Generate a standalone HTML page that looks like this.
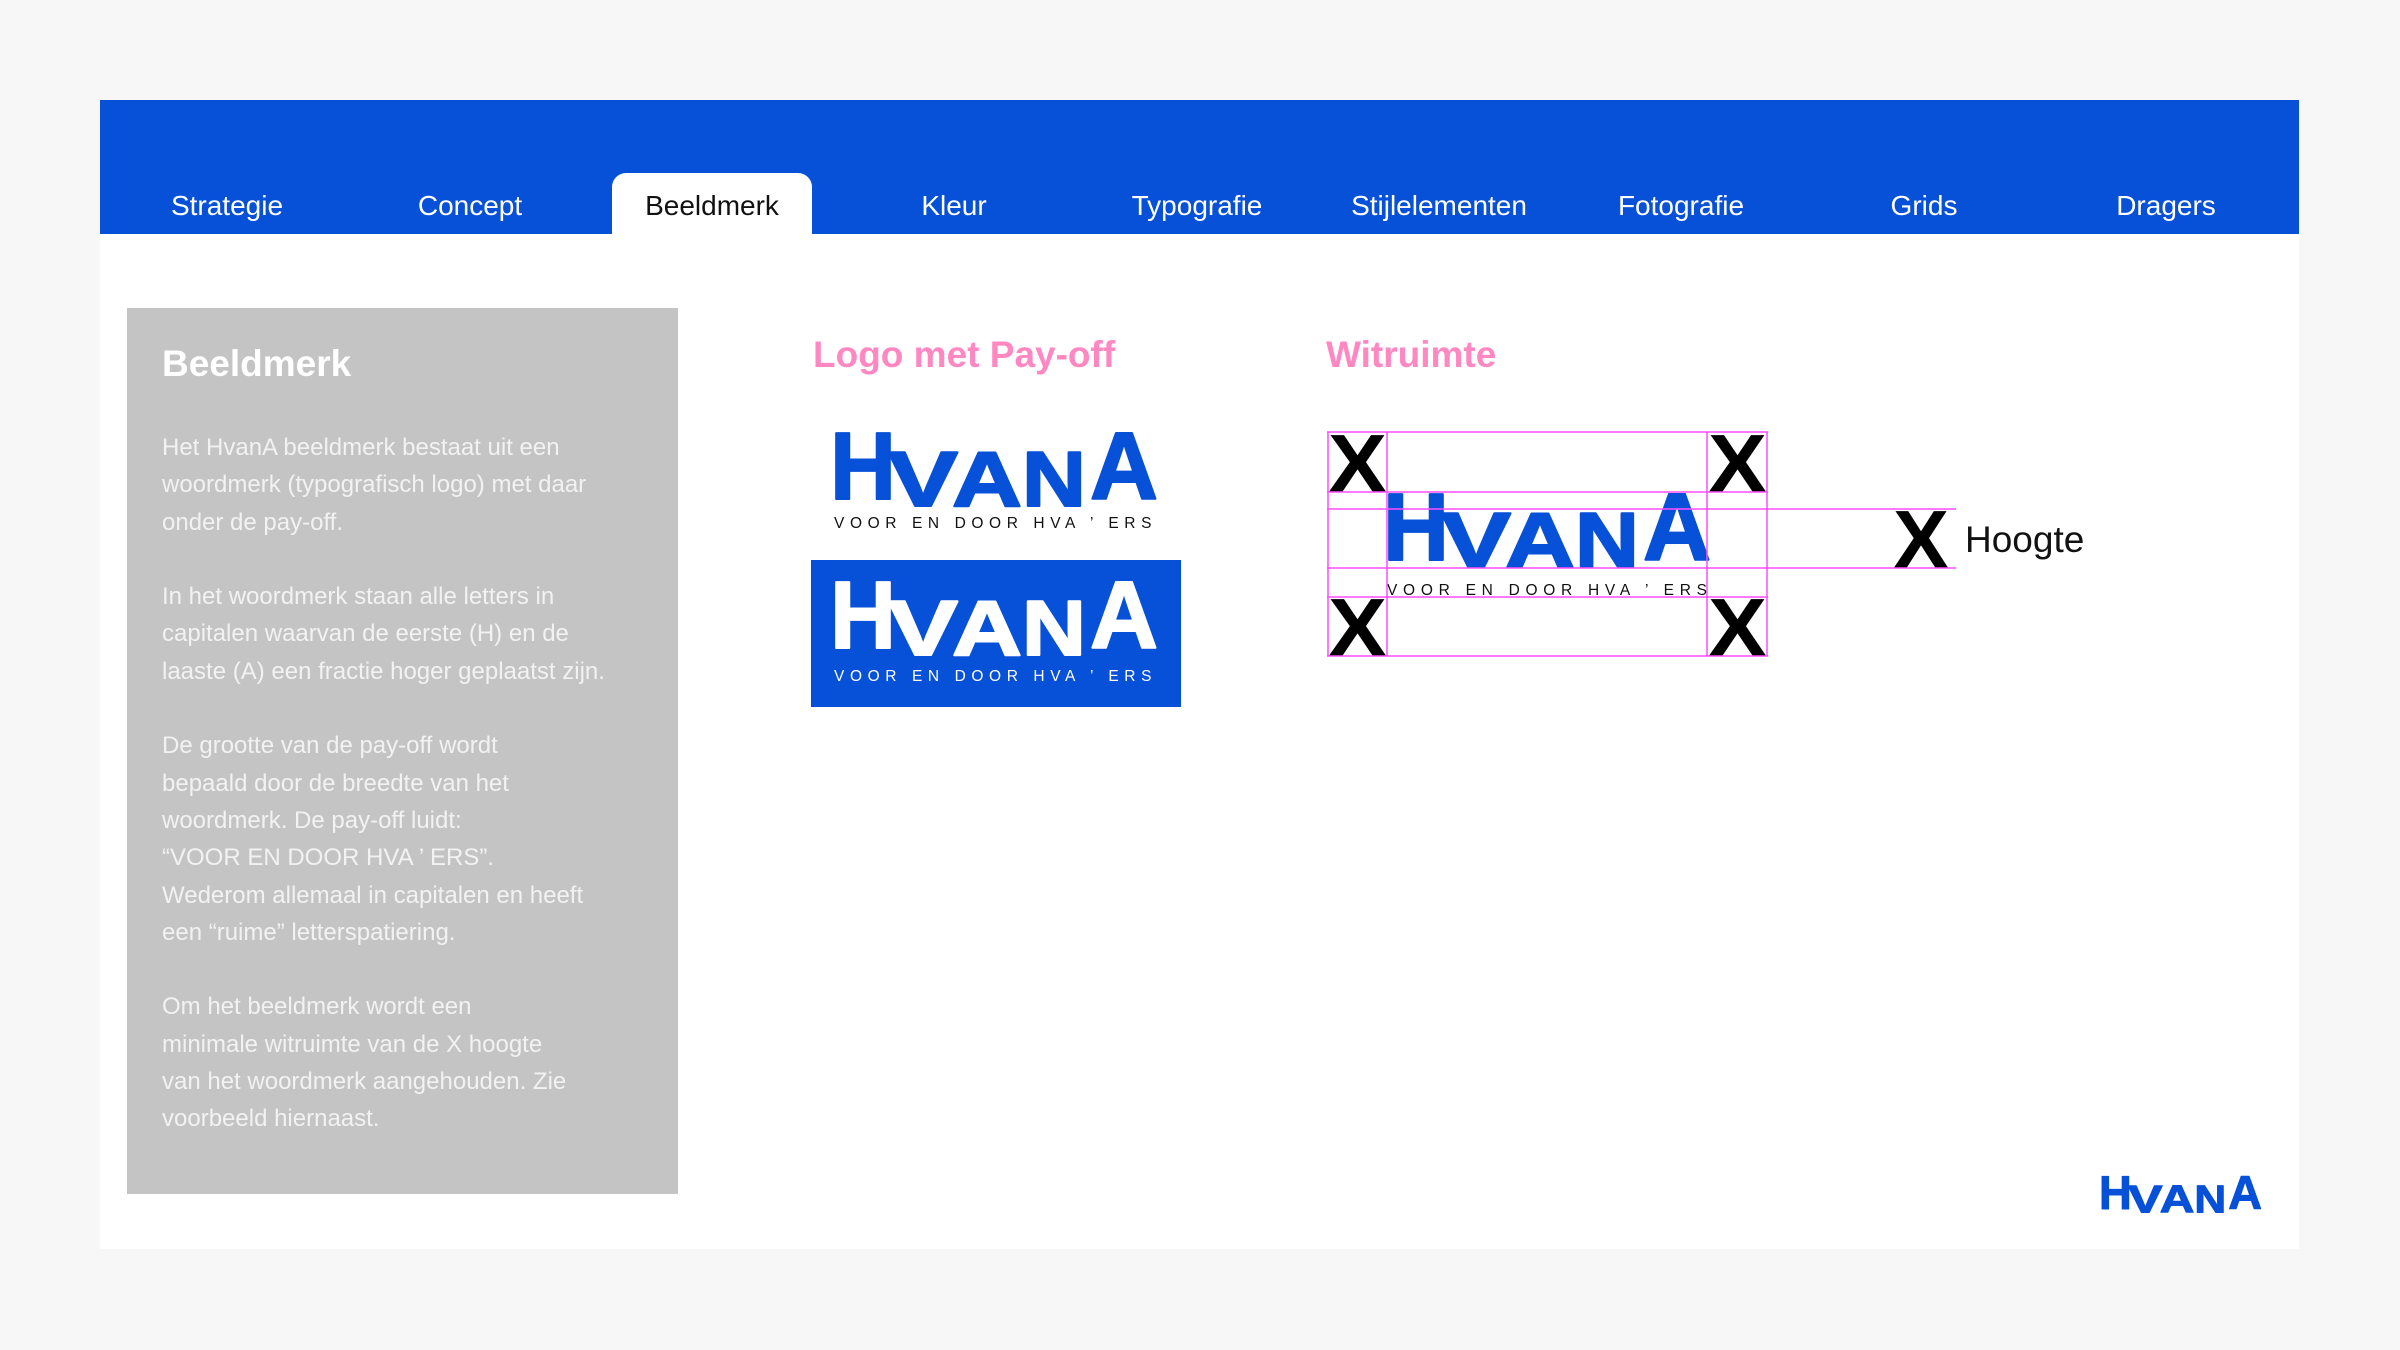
<!DOCTYPE html>
<html><head><meta charset="utf-8"><style>
body{margin:0;width:2400px;height:1350px;background:#f7f7f7;position:relative;overflow:hidden;font-family:"Liberation Sans",sans-serif}
.abs{position:absolute}
#hdr{left:100px;top:100px;width:2199px;height:134px;background:#0750d8}
#panel{left:100px;top:234px;width:2199px;height:1015px;background:#fff}
.tab{position:absolute;top:186px;width:242px;text-align:center;color:#fff;font-size:28px;line-height:40px;margin-left:-121px}
#act{left:612px;top:173px;width:200px;height:62px;background:#fff;border-radius:14px 14px 0 0}
#gray{left:127px;top:308px;width:551px;height:886px;background:#c4c4c4}
h1{position:absolute;margin:0;left:162px;top:342px;font-size:37px;color:#fff;font-weight:bold;line-height:44px}
#body{left:162px;top:429px;font-size:24px;line-height:37.3px;color:#f2f2f2;width:520px}
.pink{color:#ff88c3;font-weight:bold;font-size:37px;line-height:44px;top:333px}
.pay{font-size:15.5px;letter-spacing:5.6px;white-space:nowrap}
</style></head><body>
<div id="hdr" class="abs"></div>
<div id="panel" class="abs"></div>
<div id="act" class="abs"></div>
<div class="tab" style="left:227px">Strategie</div>
<div class="tab" style="left:470px">Concept</div>
<div class="tab" style="left:712px;color:#111">Beeldmerk</div>
<div class="tab" style="left:954px">Kleur</div>
<div class="tab" style="left:1197px">Typografie</div>
<div class="tab" style="left:1439px">Stijlelementen</div>
<div class="tab" style="left:1681px">Fotografie</div>
<div class="tab" style="left:1924px">Grids</div>
<div class="tab" style="left:2166px">Dragers</div>

<div id="gray" class="abs"></div>
<h1>Beeldmerk</h1>
<div id="body" class="abs">Het HvanA beeldmerk bestaat uit een<br>woordmerk (typografisch logo) met daar<br>onder de pay-off.<br><br>In het woordmerk staan alle letters in<br>capitalen waarvan de eerste (H) en de<br>laaste (A) een fractie hoger geplaatst zijn.<br><br>De grootte van de pay-off wordt<br>bepaald door de breedte van het<br>woordmerk. De pay-off luidt:<br>“VOOR EN DOOR HVA ’ ERS”.<br>Wederom allemaal in capitalen en heeft<br>een “ruime” letterspatiering.<br><br>Om het beeldmerk wordt een<br>minimale witruimte van de X hoogte<br>van het woordmerk aangehouden. Zie<br>voorbeeld hiernaast.</div>

<div class="abs pink" style="left:813px">Logo met Pay-off</div>
<div class="abs pink" style="left:1326px">Witruimte</div>

<svg width="0" height="0" style="position:absolute">
<defs>
<g id="lg" font-family="Liberation Sans" font-weight="bold" stroke-width="2" stroke-linejoin="round">
<text x="-4" y="70" font-size="96" textLength="66" lengthAdjust="spacingAndGlyphs">H</text>
<text x="54" y="77" font-size="78" textLength="70" lengthAdjust="spacingAndGlyphs">V</text>
<text x="118" y="77" font-size="78" textLength="70" lengthAdjust="spacingAndGlyphs">A</text>
<text x="188" y="77" font-size="78" textLength="64" lengthAdjust="spacingAndGlyphs">N</text>
<text x="256" y="70" font-size="96" textLength="68" lengthAdjust="spacingAndGlyphs">A</text>
</g>
</defs>
</svg>

<svg class="abs" style="left:834px;top:429px;overflow:visible" width="322" height="80" viewBox="0 0 322 80">
<use href="#lg" fill="#0750d8" stroke="#0750d8"/></svg>
<div class="abs pay" style="left:834px;top:515px;color:#111">VOOR EN DOOR HVA ’ ERS</div>

<div class="abs" style="left:811px;top:560px;width:370px;height:147px;background:#0750d8"></div>
<svg class="abs" style="left:834px;top:578px;overflow:visible" width="322" height="80" viewBox="0 0 322 80">
<use href="#lg" fill="#fff" stroke="#fff"/></svg>
<div class="abs pay" style="left:834px;top:668px;color:#fff">VOOR EN DOOR HVA ’ ERS</div>

<svg class="abs" style="left:0;top:0" width="2400" height="1350" viewBox="0 0 2400 1350">
<g font-family="Liberation Sans" font-weight="bold" fill="#000">
<text x="1328" y="492" font-size="83" textLength="59" lengthAdjust="spacingAndGlyphs">X</text>
<text x="1708" y="492" font-size="83" textLength="59" lengthAdjust="spacingAndGlyphs">X</text>
<text x="1328" y="656" font-size="83" textLength="59" lengthAdjust="spacingAndGlyphs">X</text>
<text x="1708" y="656" font-size="83" textLength="59" lengthAdjust="spacingAndGlyphs">X</text>
<text x="1893" y="568" font-size="83" textLength="56" lengthAdjust="spacingAndGlyphs">X</text>
</g>
<use href="#lg" fill="#0750d8" stroke="#0750d8" transform="translate(1387,490)"/>
<text x="1387" y="595" font-family="Liberation Sans" font-size="15.5" fill="#111" textLength="320" lengthAdjust="spacing">VOOR EN DOOR HVA ’ ERS</text>
<g stroke="#ff4dff" stroke-width="1.5" fill="none">
<line x1="1327" y1="432" x2="1768" y2="432"/>
<line x1="1327" y1="492" x2="1768" y2="492"/>
<line x1="1327" y1="509" x2="1956" y2="509"/>
<line x1="1327" y1="568" x2="1956" y2="568"/>
<line x1="1327" y1="597" x2="1768" y2="597"/>
<line x1="1327" y1="656" x2="1768" y2="656"/>
<line x1="1328" y1="432" x2="1328" y2="656"/>
<line x1="1387" y1="432" x2="1387" y2="656"/>
<line x1="1707" y1="432" x2="1707" y2="656"/>
<line x1="1767" y1="432" x2="1767" y2="656"/>
</g>
<text x="1965" y="552" font-family="Liberation Sans" font-size="37" fill="#111">Hoogte</text>
</svg>

<svg class="abs" style="left:2101px;top:1174px;overflow:visible" width="160" height="40" viewBox="0 0 322 80">
<use href="#lg" fill="#0750d8" stroke="#0750d8"/></svg>
</body></html>
